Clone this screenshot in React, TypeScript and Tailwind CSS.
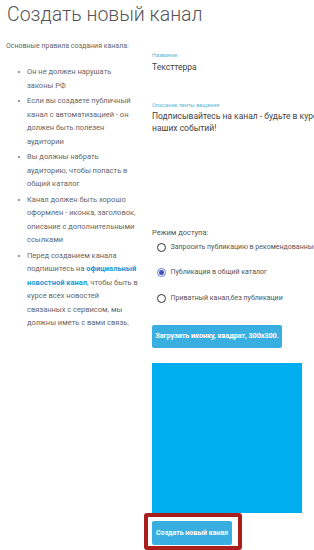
const rules: string[][] = [
  ["Он не должен нарушать", "законы РФ"],
  ["Если вы создаете публичный", "канал с автоматизацией - он", "должен быть полезен", "аудитории"],
  ["Вы должны набрать", "аудиторию, чтобы попасть в", "общий каталог"],
  ["Канал должен быть хорошо", "оформлен - иконка, заголовок,", "описание с дополнительными", "ссылками"],
]

const modes = [
  { label: "Запросить публикацию в рекомендованные", checked: false },
  { label: "Публикация в общий каталог", checked: true },
  { label: "Приватный канал,без публикации", checked: false },
]

function Radio({ checked }: { checked: boolean }) {
  if (checked) {
    return (
      <span className="flex h-[9px] w-[9px] shrink-0 items-center justify-center rounded-full border border-[#6b7fd6] bg-white">
        <span className="h-[5px] w-[5px] rounded-full bg-[#3d55c4]" />
      </span>
    )
  }
  return <span className="h-[9px] w-[9px] shrink-0 rounded-full border-[1.5px] border-[#333] bg-white" />
}

function Bullet() {
  return (
    <span className="flex h-[13.5px] w-[21px] shrink-0 items-center pl-[12px]">
      <span className="h-[2px] w-[2px] rounded-full bg-[#777]" />
    </span>
  )
}

export default function App() {
  return (
    <div className="h-[550px] w-[314px] overflow-hidden bg-white font-['Roboto',sans-serif]">
      <h1 className="whitespace-nowrap pl-[7px] text-[19.5px] font-light leading-[30px] text-[#555]">
        Создать новый канал
      </h1>

      <div className="mt-[10px] flex">
        {/* rules */}
        <div className="w-[152px] shrink-0 pl-[6px] text-[7.5px] leading-[13.5px] text-[#666]">
          <p className="whitespace-nowrap text-[7px]">Основные правила создания канала:</p>
          <ul className="mt-[11.75px] flex flex-col gap-[2px]">
            {rules.map((lines) => (
              <li key={lines[0]} className="flex">
                <Bullet />
                <span className="whitespace-nowrap">
                  {lines.map((l, i) => (
                    <span key={i} className="block">
                      {l}
                    </span>
                  ))}
                </span>
              </li>
            ))}
            <li className="flex">
              <Bullet />
              <span className="whitespace-nowrap">
                <span className="block">Перед созданием канала</span>
                <span className="block">
                  подпишитесь на <a href="#" className="font-bold text-[#1b9ad6]">официальный</a>
                </span>
                <span className="block">
                  <a href="#" className="font-bold text-[#1b9ad6]">новостной канал</a>, чтобы быть в
                </span>
                <span className="block">курсе всех новостей</span>
                <span className="block">связанных с сервисом, мы</span>
                <span className="block">должны иметь с вами связь.</span>
              </span>
            </li>
          </ul>
        </div>

        {/* form */}
        <div className="flex shrink-0 flex-col items-start pt-[11px]">
          <label className="text-[5.5px] leading-[8px] text-[#5bb8d6]">Название</label>
          <p className="mt-[2px] text-[8.5px] leading-[12px] text-[#444]">Тексттерра</p>

          <label className="mt-[28px] text-[5.5px] leading-[8px] text-[#5bb8d6]">Описание ленты вещания</label>
          <p className="mt-[1px] whitespace-nowrap text-[8.5px] leading-[12px] text-[#444]">
            Подписывайтесь на канал - будьте в курсе
            <br />
            наших событий!
          </p>

          <p className="mt-[93px] text-[7.5px] leading-[12px] text-[#555]">Режим доступа:</p>
          <div className="mt-[2px] flex flex-col gap-[13.5px] pl-[4.5px]">
            {modes.map((m) => (
              <div key={m.label} className="flex h-[12px] items-center gap-[5px] whitespace-nowrap text-[7px] text-[#555]">
                <Radio checked={m.checked} />
                <span>{m.label}</span>
              </div>
            ))}
          </div>

          <button className="mt-[21px] h-[23px] w-[130px] whitespace-nowrap rounded-[2px] bg-[#38afe0] text-[7.3px] font-bold tracking-[-0.1px] text-white">
            Загрузить иконку, квадрат, 300x300.
          </button>

          <div className="mt-[15px] h-[150px] w-[150px] bg-[#00aeef]" />

          <div className="ml-[-8px] rounded-[3px] border-4 border-[#a81f1c] py-[1px] pl-[4px] pr-[6px]">
            <button className="h-[24px] w-[80px] whitespace-nowrap rounded-[2px] bg-[#38afe0] text-[7px] font-bold text-white">
              Создать новый канал
            </button>
          </div>
        </div>
      </div>
    </div>
  )
}
